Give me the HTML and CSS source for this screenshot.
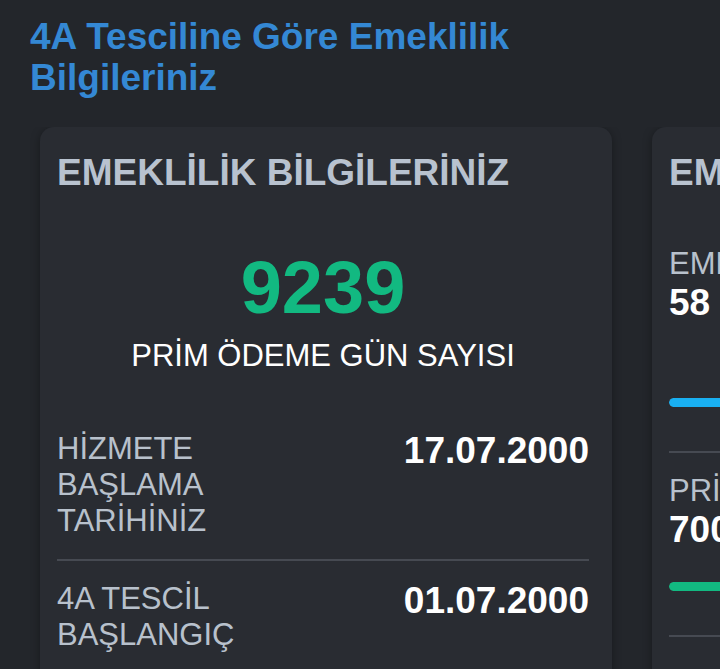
FILE: index.html
```html
<!DOCTYPE html>
<html lang="tr">
<head>
    <meta charset="UTF-8">
    <meta name="viewport" content="width=device-width, initial-scale=1.0">
    <title>Emeklilik Bilgileriniz</title>
    <link rel="stylesheet" href="styles.css">
</head>
<body>
    <div class="page">
        <h1 class="page-title">4A Tesciline Göre Emeklilik Bilgileriniz</h1>

        <div class="card-slider">
            <div class="info-card">
                <h2 class="card-title">EMEKLİLİK BİLGİLERİNİZ</h2>

                <div class="big-stat">
                    <div class="big-stat-value">9239</div>
                    <div class="big-stat-label">PRİM ÖDEME GÜN SAYISI</div>
                </div>

                <div class="info-row">
                    <span class="info-label">HİZMETE BAŞLAMA TARİHİNİZ</span>
                    <span class="info-value">17.07.2000</span>
                </div>
                <div class="info-row">
                    <span class="info-label">4A TESCİL BAŞLANGIÇ</span>
                    <span class="info-value">01.07.2000</span>
                </div>
            </div>

            <div class="info-card">
                <h2 class="card-title">EMEKLİLİK ŞARTLARINIZ</h2>

                <div class="progress-item first">
                    <div class="info-label">EMEKLİLİK YAŞI</div>
                    <div class="progress-value">58</div>
                    <div class="progress-track">
                        <div class="progress-fill blue" style="width: 85%"></div>
                    </div>
                </div>
                <div class="progress-item">
                    <div class="info-label">PRİM GÜN SAYISI</div>
                    <div class="progress-value">7000</div>
                    <div class="progress-track">
                        <div class="progress-fill green" style="width: 100%"></div>
                    </div>
                </div>
            </div>
        </div>
    </div>
</body>
</html>
```

FILE: styles.css
```css
* {
    margin: 0;
    padding: 0;
    box-sizing: border-box;
}

body {
    font-family: "Liberation Sans", Arial, sans-serif;
    background: #23262b;
    color: #fff;
    overflow: hidden;
}

.page {
    padding-top: 16px;
}

.page-title {
    font-size: 37px;
    line-height: 41px;
    font-weight: 700;
    color: #3488d4;
    padding: 0 30px;
    max-width: 560px;
}

/* horizontally scrolling cards */
.card-slider {
    display: flex;
    gap: 40px;
    padding: 0 40px;
    margin-top: 29px;
    overflow: hidden;
}

.info-card {
    flex: 0 0 572px;
    background: #292c32;
    border-radius: 14px;
    box-shadow: 0 2px 10px rgba(0, 0, 0, 0.35);
    padding: 25px 23px 40px 17px;
}

.card-title {
    font-size: 37px;
    line-height: 41px;
    font-weight: 700;
    color: #b8c2cf;
    white-space: nowrap;
}

.big-stat {
    text-align: center;
    margin-top: 55px;
}

.big-stat-value {
    font-size: 74px;
    line-height: 80px;
    font-weight: 700;
    color: #12b981;
}

.big-stat-label {
    font-size: 31px;
    line-height: 36px;
    margin-top: 10px;
    color: #fff;
}

.info-row {
    display: flex;
    justify-content: space-between;
    align-items: flex-start;
    padding: 20px 0;
    border-bottom: 2px solid #464a52;
}

.big-stat + .info-row {
    margin-top: 37px;
}

.info-label {
    font-size: 31px;
    line-height: 36px;
    color: #b8c1cc;
    max-width: 250px;
}

.info-value {
    font-size: 37px;
    line-height: 36px;
    font-weight: 700;
    padding-top: 2px;
    color: #fff;
}

.progress-item {
    padding: 20px 0 44px;
    border-bottom: 2px solid #464a52;
}

.progress-item.first {
    padding-top: 53px;
}

.progress-item .info-label {
    max-width: none;
    white-space: nowrap;
}

.progress-value {
    font-size: 37px;
    line-height: 36px;
    font-weight: 700;
    padding-top: 3px;
}

.progress-track {
    height: 9px;
    margin-top: 34px;
    border-radius: 5px;
    background: rgba(255, 255, 255, 0.08);
    overflow: hidden;
}

.progress-item.first .progress-track {
    margin-top: 77px;
}

.progress-fill {
    height: 100%;
    border-radius: 5px;
}

.progress-fill.blue {
    background: #19b0f2;
}

.progress-fill.green {
    background: #12b981;
}
```
